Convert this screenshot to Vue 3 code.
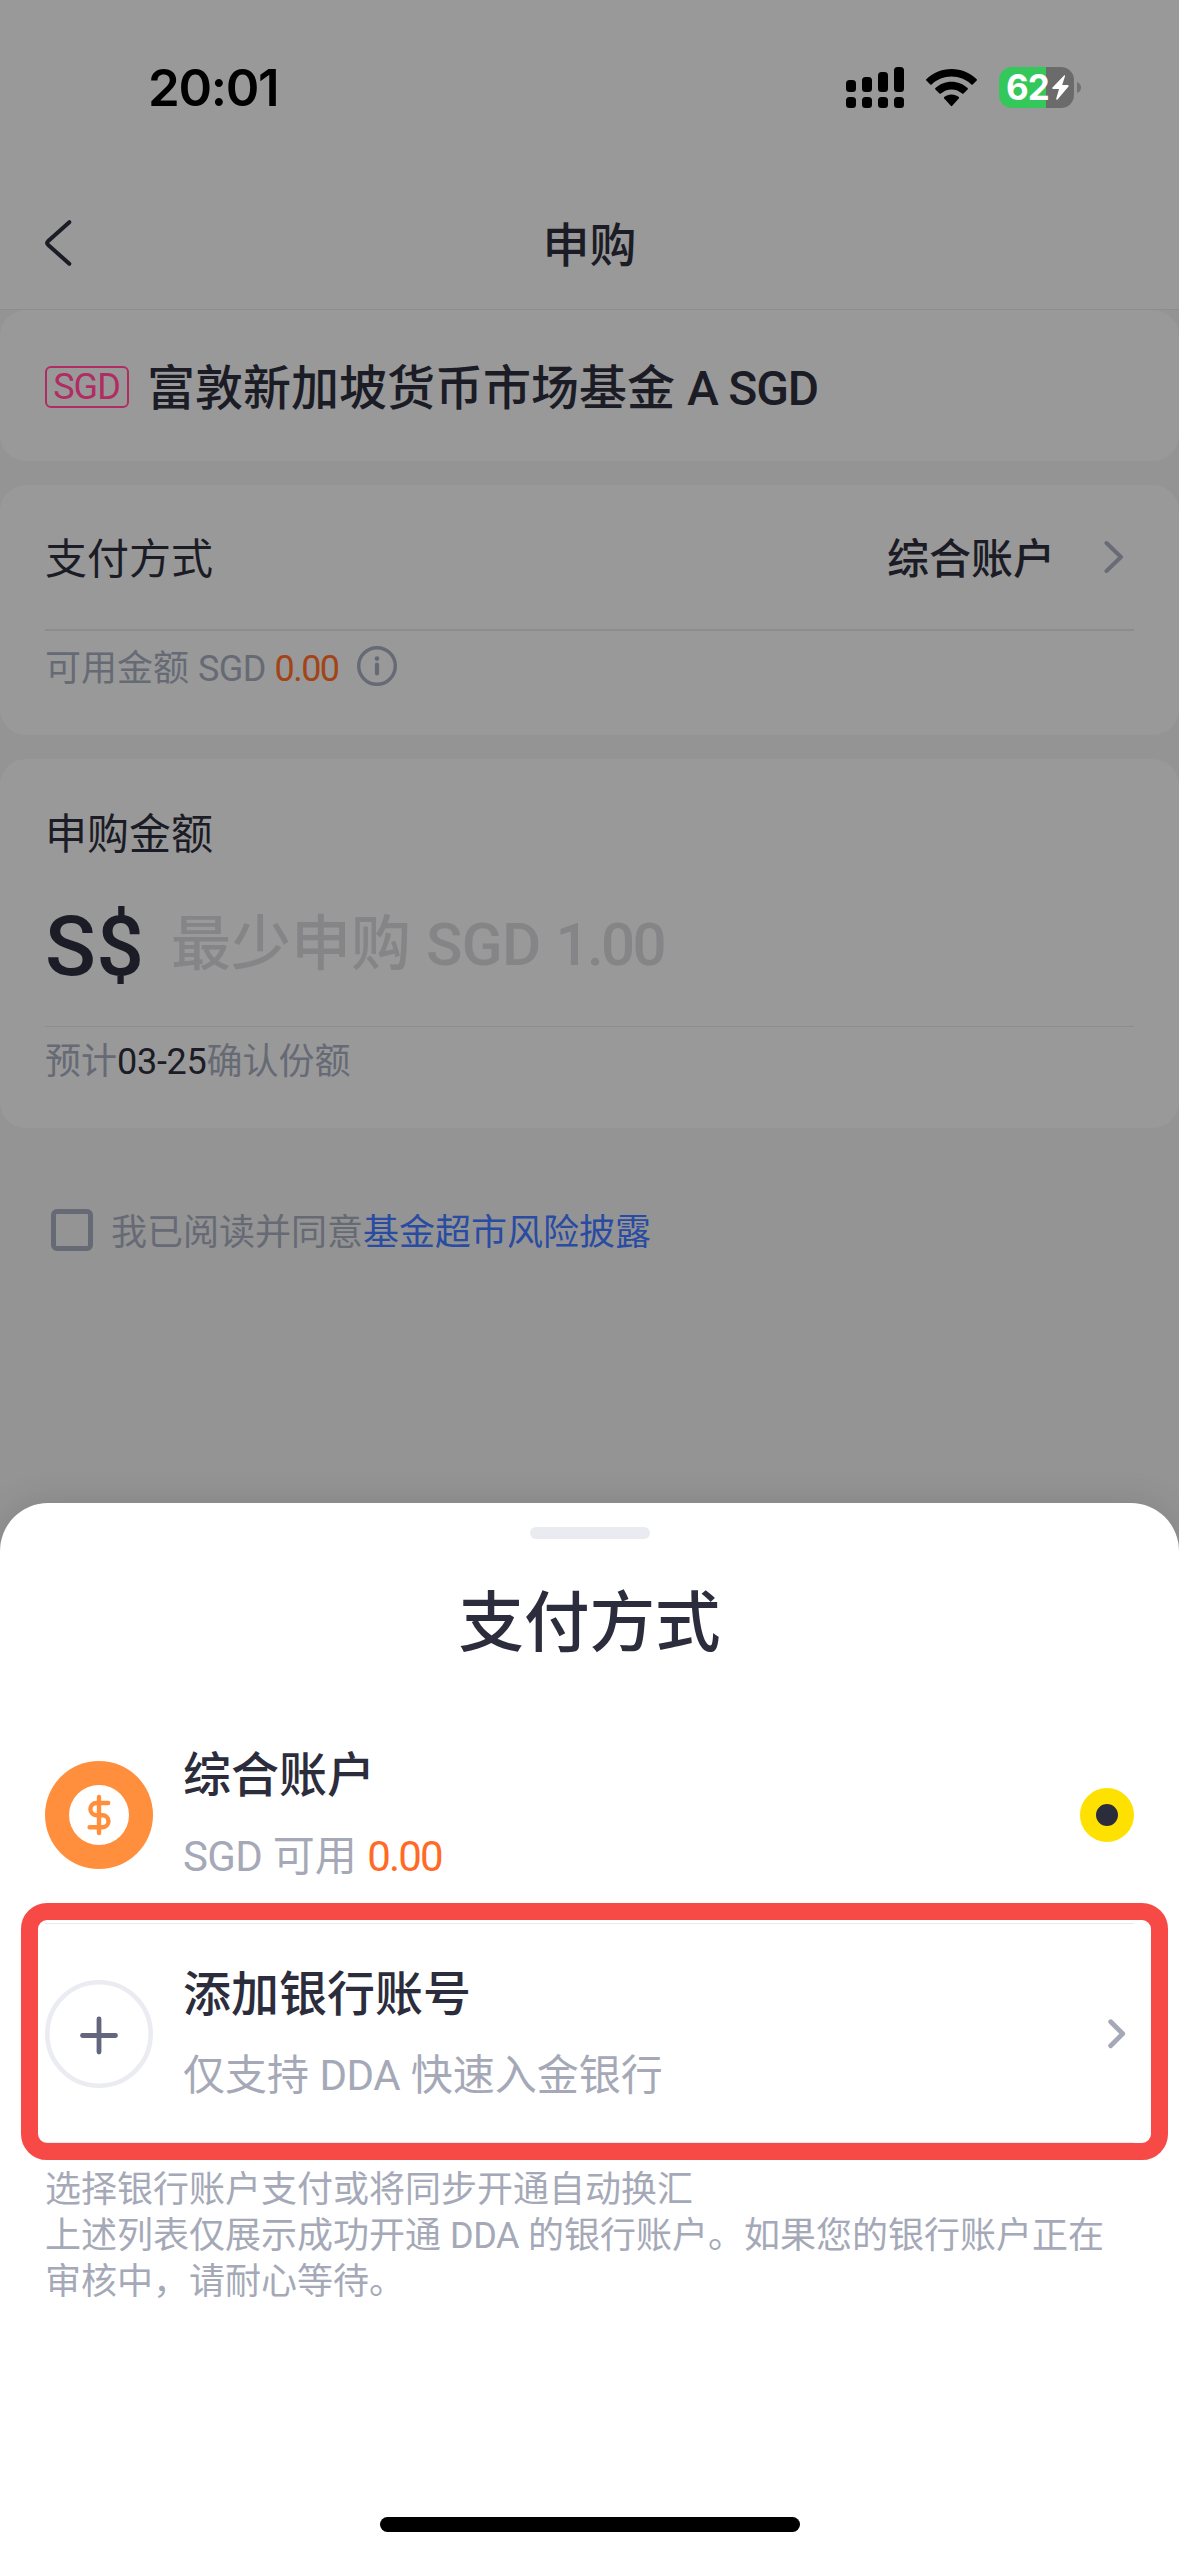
<script setup>
const signalBars = [
  { x: 0, y: 13, h: 12 },
  { x: 16, y: 10, h: 15 },
  { x: 32, y: 5, h: 20 },
  { x: 48, y: 0, h: 25 },
]
</script>

<template>
  <div class="screen">
    <main class="page">
      <div class="status">
        <span class="time">20:01</span>
        <div class="indicators">
          <svg class="signal" width="58" height="41" viewBox="0 0 58 41">
            <g v-for="bar in signalBars" :key="bar.x">
              <rect :x="bar.x" :y="bar.y" width="10" :height="bar.h" rx="3.5" />
              <rect :x="bar.x" y="30" width="10" height="11" rx="3.5" />
            </g>
          </svg>
          <svg class="wifi" width="51" height="38" viewBox="0 0 51 38">
            <path d="M25.5 0C35.300 0 44.300 3.800 50.700 10.200Q51.300 10.900 50.700 11.600L46.700 15.400Q46 16 45.300 15.400C40 10.400 33 7.500 25.500 7.500S11 10.400 5.700 15.400Q5 16 4.300 15.400L.3 11.600Q-.3 10.900 .3 10.200C6.700 3.800 15.700 0 25.500 0Z" />
            <path d="M25.500 12.800C31.700 12.800 37.400 15.200 41.600 19.100Q42.300 19.800 41.600 20.500L37.500 24.500Q36.800 25.100 36.100 24.500C33.300 22 29.600 20.400 25.500 20.400S17.700 22 14.900 24.500Q14.200 25.100 13.500 24.500L9.400 20.500Q8.700 19.800 9.400 19.100C13.600 15.200 19.300 12.800 25.500 12.800Z" />
            <path d="M25.500 25.400C28.300 25.400 30.800 26.400 32.800 28Q33.400 28.700 32.800 29.400L26.200 36.800Q25.500 37.500 24.800 36.800L18.200 29.400Q17.600 28.700 18.200 28C20.200 26.400 22.700 25.400 25.500 25.400Z" />
          </svg>
          <div class="battery">
            <span class="percent">62</span>
            <svg class="bolt" width="17" height="25" viewBox="0 0 17 25">
              <path d="M12.300.3 .5 12.500Q-.2 13.700 1.200 14H7L4.200 23.800Q4.300 25.500 5.500 24.500L16.500 11.500Q17 10.300 15.700 10H10.200L13 1.200Q13.200-.2 12.300.3Z" fill="#fff" />
            </svg>
          </div>
          <svg class="nub" width="4" height="11" viewBox="0 0 4 11"><path d="M0 0Q4 1.500 4 5.500T0 11Z" fill="#727272" /></svg>
        </div>
      </div>

      <header class="nav">
        <svg class="back" width="28" height="46" viewBox="0 0 28 46">
          <path d="M25.300 2.200 4 21.300Q2.300 23 4 24.700L25.300 43.800" fill="none" stroke="#1b1c25" stroke-width="4" stroke-linecap="round" />
        </svg>
        <h1>申购</h1>
      </header>

      <section class="card fund">
        <span class="badge"><span>SGD</span></span>
        <strong class="fund-name">富敦新加坡货币市场基金 <i>A SGD</i></strong>
      </section>

      <section class="card method">
        <div class="method-row">
          <span>支付方式</span>
          <strong>综合账户</strong>
          <svg class="chevron" width="20" height="34" viewBox="0 0 20 34">
            <path d="M2.500 3 17 17 2.500 31" fill="none" stroke="#696c77" stroke-width="4" stroke-linecap="round" stroke-linejoin="round" />
          </svg>
        </div>
        <div class="available">
          <span>可用金额 <i class="cur">SGD</i> <b>0.00</b></span>
          <svg width="40" height="40" viewBox="0 0 40 40">
            <circle cx="20" cy="20" r="18.300" fill="none" stroke="#666a75" stroke-width="3.400" />
            <circle cx="20" cy="12.600" r="2.300" fill="#666a75" />
            <path d="M20 18.500V27.500" stroke="#666a75" stroke-width="4.200" stroke-linecap="round" />
          </svg>
        </div>
      </section>

      <section class="card amount">
        <div class="amount-label">申购金额</div>
        <div class="amount-input">
          <span class="symbol">S$</span>
          <span class="placeholder">最少申购 <i class="cur">SGD</i> <b>1.00</b></span>
        </div>
        <div class="confirm">预计<b>03-25</b>确认份额</div>
      </section>

      <div class="agreement">
        <span class="checkbox"></span>
        <span>我已阅读并同意<a>基金超市风险披露</a></span>
      </div>
    </main>

    <section class="sheet">
      <div class="handle"></div>
      <h2>支付方式</h2>

      <div class="option">
        <svg class="option-icon" width="108" height="108" viewBox="0 0 108 108">
          <circle cx="54" cy="54" r="54" fill="#ff8f3c" />
          <circle cx="54" cy="54" r="30" fill="#fff" />
          <path d="M54 36V72M63.200 42H51.500A6.100 6.100 0 0 0 51.500 54.200H57.500A6 6 0 0 1 57.500 66.200H44.600" fill="none" stroke="#ff8f3c" stroke-width="4.400" stroke-linecap="round" stroke-linejoin="round" />
        </svg>
        <div class="option-text">
          <strong>综合账户</strong>
          <span><i class="cur">SGD</i> 可用 <b>0.00</b></span>
        </div>
        <span class="radio"></span>
      </div>

      <div class="option">
        <svg class="option-icon" width="108" height="108" viewBox="0 0 108 108">
          <circle cx="54" cy="54" r="51.700" fill="none" stroke="#ebecf2" stroke-width="4.600" />
          <path d="M37.500 55.500H70.500M54 39V72" fill="none" stroke="#63667c" stroke-width="4.800" stroke-linecap="round" />
        </svg>
        <div class="option-text">
          <strong>添加银行账号</strong>
          <span>仅支持 <i class="dda">DDA</i> 快速入金银行</span>
        </div>
        <svg class="option-chevron" width="18" height="30" viewBox="0 0 18 30">
          <path d="M2.700 2.700 14.700 14.700 2.700 26.700" fill="none" stroke="#a5a9b7" stroke-width="4.800" stroke-linecap="round" stroke-linejoin="round" />
        </svg>
        <div class="highlight"></div>
      </div>

      <p class="note">选择银行账户支付或将同步开通自动换汇<br>上述列表仅展示成功开通 <i class="dda">DDA</i> 的银行账户。如果您的银行账户正在<br>审核中，请耐心等待。</p>

      <div class="home"></div>
    </section>
  </div>
</template>

<style>
body {
  margin: 0;
  background: #949494;
}
</style>

<style scoped>
* {
  box-sizing: border-box;
}
.screen {
  width: 1179px;
  height: 2556px;
  overflow: hidden;
  display: flex;
  flex-direction: column;
  background: #949494;
  color: #1b1c25;
  font-family: Roboto, "Noto Sans CJK SC", sans-serif;
  white-space: nowrap;
}
i {
  font-style: normal;
}
b {
  font-weight: 400;
}
strong,
h1,
h2 {
  font-weight: 500;
  margin: 0;
}
.page {
  height: 1503px;
  flex: none;
  display: flex;
  flex-direction: column;
}
.status {
  height: 184px;
  padding: 61px 98px 0 148px;
  background: #999;
  display: flex;
  justify-content: space-between;
}
.time {
  font: 600 51px/54px Inter, sans-serif;
  letter-spacing: -1.3px;
  color: #000;
}
.indicators {
  display: flex;
  padding-top: 6px;
  height: 47px;
  align-items: center;
}
.wifi {
  margin-left: 22px;
}
.battery {
  width: 75px;
  height: 41px;
  margin: 0 3px 0 22px;
  border-radius: 13px;
  background: linear-gradient(90deg, #34c759 47px, #6b6b6b 47px);
  display: flex;
  align-items: center;
  padding-left: 7px;
}
.percent {
  width: 46px;
  font: 700 35px/41px Inter, sans-serif;
  letter-spacing: -1px;
  color: #fff;
}
.nav {
  height: 126px;
  background: #999;
  border-bottom: 1px solid #8d8d8d;
  display: flex;
  align-items: center;
  padding: 0 44px;
}
.nav h1 {
  flex: 1;
  text-align: center;
  margin-right: 28px;
  margin-top: -1px;
  font-size: 47px;
  line-height: 64px;
}
.nav .back {
  margin-top: -8px;
}
.card {
  background: #999;
  border-radius: 26px;
  padding: 0 45px;
}
.fund {
  height: 151px;
  display: flex;
  align-items: center;
  gap: 18px;
  padding-top: 3px;
}
.badge {
  width: 84px;
  height: 42px;
  border: 2px solid #b12c62;
  border-radius: 6px;
  color: #b12c62;
  font-size: 36px;
  line-height: 39px;
  text-align: center;
}
.badge span {
  letter-spacing: -1px;
  margin-left: -1px;
}
.fund-name {
  font-size: 48px;
  line-height: 64px;
  padding-top: 3px;
}
.fund-name i {
  letter-spacing: -1.2px;
}
.method {
  height: 250px;
  margin-top: 24px;
}
.method-row {
  height: 146px;
  border-bottom: 2px solid #8c8c8c;
  display: flex;
  align-items: center;
  font-size: 42px;
  line-height: 60px;
  padding-top: 6px;
}
.method-row strong {
  margin-left: auto;
}
.chevron {
  margin: -6px 10px 0 49px;
}
.available {
  display: flex;
  align-items: center;
  height: 70px;
  font-size: 36px;
  color: #666a75;
  gap: 19px;
}
.available > span {
  margin-top: -2px;
}
.cur {
  letter-spacing: -0.6px;
}
.dda {
  letter-spacing: -0.4px;
}
.available b {
  color: #a24417;
  letter-spacing: -1.6px;
}
.amount {
  height: 369px;
  margin-top: 24px;
}
.amount-label {
  padding-top: 46px;
  height: 115px;
  font-size: 42px;
  line-height: 60px;
}
.amount-input {
  height: 153px;
  border-bottom: 1px solid #8d8d8d;
  display: flex;
}
.symbol {
  width: 126px;
  font-size: 84px;
  font-weight: 500;
  line-height: 146px;
  letter-spacing: 0.5px;
}
.placeholder {
  font-size: 60px;
  font-weight: 500;
  line-height: 142px;
  color: #858587;
}
.placeholder b {
  font-weight: 500;
  letter-spacing: -2.600px;
}
.confirm {
  font-size: 36px;
  line-height: 70px;
  color: #666a75;
}
.confirm b {
  color: #1b1c25;
  letter-spacing: -0.3px;
}
.agreement {
  margin-top: 70px;
  padding-left: 51px;
  display: flex;
  align-items: center;
  gap: 18px;
  height: 63px;
  font-size: 36px;
  color: #666a75;
}
.agreement > span:last-child {
  margin-top: -2px;
}
.agreement a {
  color: #294ba2;
}
.checkbox {
  width: 42px;
  height: 42px;
  border: 5px solid #666a75;
  border-radius: 6px;
}
.sheet {
  flex: 1;
  background: #fff;
  border-radius: 48px 48px 0 0;
  box-shadow: 0 0 36px rgba(0, 0, 0, 0.12);
  color: #2c2d3c;
  padding: 24px 45px;
  display: flex;
  flex-direction: column;
}
.handle {
  width: 120px;
  height: 12px;
  border-radius: 6px;
  background: #eaebf1;
  align-self: center;
}
.sheet h2 {
  margin-top: 40px;
  height: 126px;
  text-align: center;
  font-size: 65.500px;
  line-height: 90px;
}
.option {
  position: relative;
  height: 219px;
  border-bottom: 1px solid #e9eaee;
  padding-top: 2px;
  display: flex;
  align-items: center;
}
.option-text {
  display: flex;
  flex-direction: column;
  gap: 17px;
  margin: 2px auto 0 30px;
}
.option-text strong {
  font-size: 48px;
  line-height: 64px;
}
.option-text span {
  font-size: 42px;
  line-height: 64px;
  color: #a5a9b7;
}
.option-text b {
  color: #ff6a26;
  letter-spacing: -1.8px;
}
.radio {
  width: 54px;
  height: 54px;
  border-radius: 50%;
  border: 16.500px solid #fee100;
  background: #2c2d3c;
}
.option-chevron {
  margin-right: 8px;
}
.highlight {
  position: absolute;
  left: -24px;
  right: -34px;
  top: -21px;
  height: 257px;
  border: 17px solid #f74a47;
  border-radius: 26px;
}
.note {
  margin: 24px 0 0;
  font-size: 36px;
  line-height: 46px;
  color: #a5a9b7;
}
.home {
  width: 420px;
  height: 15px;
  border-radius: 8px;
  background: #000;
  align-self: center;
  margin-top: auto;
}
</style>
